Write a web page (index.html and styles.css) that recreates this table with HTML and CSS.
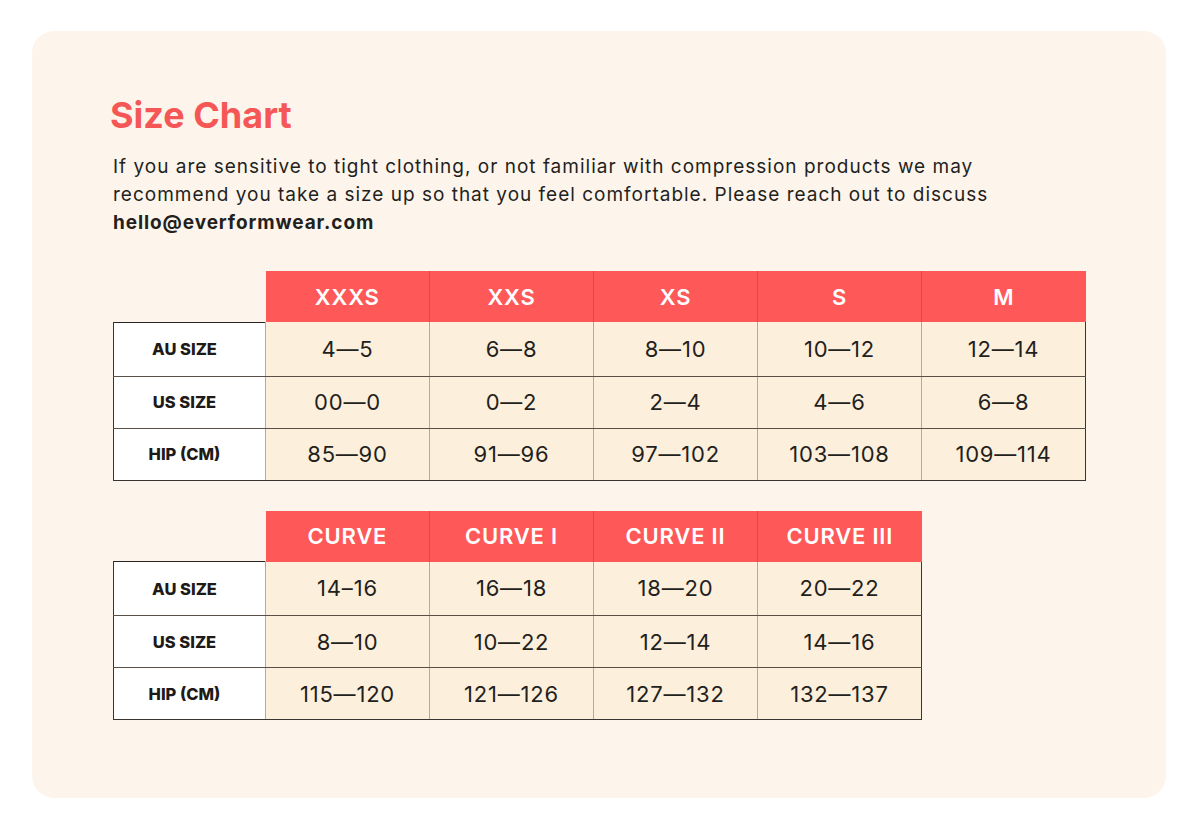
FILE: index.html
```html
<!DOCTYPE html>
<html>
<head>
<meta charset="utf-8">
<link rel="stylesheet" href="styles.css">
</head>
<body>
<div class="card">
  <h1 class="title">Size Chart</h1>
  <p class="intro">If you are sensitive to tight clothing, or not familiar with compression products we may recommend you take a size up so that you feel comfortable. Please reach out to discuss <strong>hello@everformwear.com</strong></p>

  <table class="chart">
    <thead>
      <tr><th class="corner"></th><th>XXXS</th><th>XXS</th><th>XS</th><th>S</th><th>M</th></tr>
    </thead>
    <tbody>
      <tr><td class="label">AU SIZE</td><td>4—5</td><td>6—8</td><td>8—10</td><td>10—12</td><td>12—14</td></tr>
      <tr><td class="label">US SIZE</td><td>00—0</td><td>0—2</td><td>2—4</td><td>4—6</td><td>6—8</td></tr>
      <tr><td class="label">HIP (CM)</td><td>85—90</td><td>91—96</td><td>97—102</td><td>103—108</td><td>109—114</td></tr>
    </tbody>
  </table>

  <table class="chart chart-curve">
    <thead>
      <tr><th class="corner"></th><th>CURVE</th><th>CURVE I</th><th>CURVE II</th><th>CURVE III</th></tr>
    </thead>
    <tbody>
      <tr><td class="label">AU SIZE</td><td>14–16</td><td>16—18</td><td>18—20</td><td>20—22</td></tr>
      <tr><td class="label">US SIZE</td><td>8—10</td><td>10—22</td><td>12—14</td><td>14—16</td></tr>
      <tr><td class="label">HIP (CM)</td><td>115—120</td><td>121—126</td><td>127—132</td><td>132—137</td></tr>
    </tbody>
  </table>
</div>
</body>
</html>
```

FILE: styles.css
```css
html, body {
  margin: 0;
  padding: 0;
  background: #ffffff;
}
body {
  font-family: "Inter", "Noto Sans", sans-serif;
  color: #231f1c;
}
.card {
  margin: 31px 34px 31px 32px;
  height: 767px;
  box-sizing: border-box;
  background: #fdf5ec;
  border-radius: 22px;
  padding: 62px 78px 0 81px;
}
.title {
  margin: 0 0 0 -3px;
  font-size: 36px;
  line-height: 44px;
  font-weight: 700;
  color: #f55757;
  letter-spacing: 0;
}
.intro {
  margin: 16px 0 0 0;
  font-size: 19px;
  line-height: 28px;
  font-weight: 400;
  color: #231f1c;
  max-width: 885px;
  letter-spacing: 1px;
}
.intro strong {
  font-weight: 650;
  letter-spacing: 0.9px;
}
.chart {
  border-collapse: collapse;
  margin-top: 34px;
  table-layout: fixed;
}
.chart-curve {
  margin-top: 30px;
}
.chart th, .chart td {
  padding: 0;
  text-align: center;
  box-sizing: border-box;
}
.chart th {
  width: 164px;
  height: 51px;
  background: #ff5858;
  color: #ffffff;
  font-size: 22px;
  font-weight: 600;
  border-left: 1px solid #d84a46;
  letter-spacing: 0.8px;
}
.chart th:nth-child(2) {
  border-left: none;
}
.chart th.corner {
  width: 152px;
  background: transparent;
  border: none;
}
.chart td {
  height: 52px;
  background: #fcefdc;
  font-size: 22px;
  font-weight: 400;
  letter-spacing: 0.8px;
  color: #231f1c;
  border-left: 1px solid #b9aa98;
  border-top: 1px solid #5a5048;
  border-bottom: 1px solid #5a5048;
}
.chart tbody tr:first-child td {
  height: 54px;
}
.chart td:last-child {
  border-right: 1.5px solid #3a3430;
}
.chart tr:last-child td {
  border-bottom: 1.5px solid #3a3430;
}
.chart tbody tr:first-child td {
  border-top: none;
}
.chart tbody tr:first-child td.label {
  border-top: 1.5px solid #2a2522;
}
.chart td.label {
  background: #ffffff;
  font-size: 16.5px;
  font-weight: 800;
  letter-spacing: 0;
  color: #1e1a18;
  padding-right: 10px;
  border-left: 1.5px solid #3a3430;
  border-right: 1px solid #b9aa98;
}
```
